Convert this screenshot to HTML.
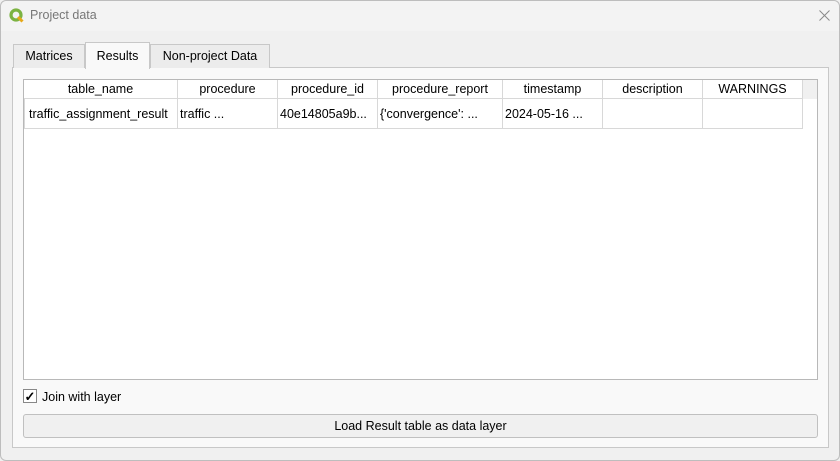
<html><head><style>
body{margin:0;width:840px;height:461px;background:#f0f0f0;font-family:"Liberation Sans",sans-serif;font-size:12px;color:#000;position:relative;overflow:hidden}
.a{position:absolute}
.tab{position:absolute;border:1px solid #c8c8c8;border-bottom:none;background:#ececec;text-align:center;line-height:23px;font-size:12.5px;box-sizing:border-box}
.h{position:absolute;top:80px;height:19px;line-height:19px;text-align:center;border-right:1px solid #d8d8d8;border-bottom:1px solid #d8d8d8;box-sizing:border-box;background:#fff;font-size:12.5px}
.c{position:absolute;top:99px;height:30px;line-height:30px;padding-left:2px;border-right:1px solid #d8d8d8;border-bottom:1px solid #d8d8d8;box-sizing:border-box;font-size:12.5px;white-space:nowrap;overflow:hidden}
</style></head><body>
<div class="a" style="left:0;top:0;width:838px;height:459px;border:1px solid #bdbdbd;border-radius:6px;background:#f0f0f0"></div>
<div class="a" style="left:1px;top:1px;width:838px;height:30px;background:#f3f3f3;border-radius:6px 6px 0 0"></div>
<svg class="a" style="left:9px;top:8px" width="15" height="15" viewBox="0 0 15 15"><circle cx="7" cy="7" r="5" fill="none" stroke="#7cb342" stroke-width="3.2"/><path d="M9 9 L13.5 13.5" stroke="#e6a818" stroke-width="3"/></svg>
<div class="a" style="left:30px;top:8px;font-size:12.5px;color:#777">Project data</div>
<svg class="a" style="left:819px;top:10px" width="11" height="11" viewBox="0 0 11 11"><path d="M0.5 0.5L10.5 10.5M10.5 0.5L0.5 10.5" stroke="#888" stroke-width="1"/></svg>
<div class="a" style="left:12px;top:67px;width:817px;height:381px;border:1px solid #c8c8c8;background:#f9f9f9;box-sizing:border-box"></div>
<div class="tab" style="left:13px;top:44px;width:72px;height:24px">Matrices</div>
<div class="tab" style="left:85px;top:42px;width:65px;height:27px;background:#f9f9f9;line-height:27px">Results</div>
<div class="tab" style="left:150px;top:44px;width:120px;height:24px">Non-project Data</div>
<div class="a" style="left:23px;top:79px;width:795px;height:301px;border:1px solid #b8b8b8;background:#fff;box-sizing:border-box"></div>
<div class="a" style="left:803px;top:80px;width:14px;height:19px;background:#f0f0f0"></div>
<div class="h" style="left:24px;width:154px">table_name</div>
<div class="h" style="left:178px;width:100px">procedure</div>
<div class="h" style="left:278px;width:100px">procedure_id</div>
<div class="h" style="left:378px;width:125px">procedure_report</div>
<div class="h" style="left:503px;width:100px">timestamp</div>
<div class="h" style="left:603px;width:100px">description</div>
<div class="h" style="left:703px;width:100px">WARNINGS</div>
<div class="c" style="left:24px;width:154px;border-left:1px solid #d8d8d8;padding-left:4px">traffic_assignment_result</div>
<div class="c" style="left:178px;width:100px">traffic ...</div>
<div class="c" style="left:278px;width:100px">40e14805a9b...</div>
<div class="c" style="left:378px;width:125px">{'convergence': ...</div>
<div class="c" style="left:503px;width:100px">2024-05-16 ...</div>
<div class="c" style="left:603px;width:100px"></div>
<div class="c" style="left:703px;width:100px"></div>
<div class="a" style="left:23px;top:389px;width:14px;height:14px;border:1px solid #888;background:#fff;box-sizing:border-box;font-size:13px;line-height:13px;text-align:center;font-weight:bold">✓</div>
<div class="a" style="left:42px;top:390px;font-size:12.5px">Join with layer</div>
<div class="a" style="left:23px;top:414px;width:795px;height:24px;border:1px solid #c0c0c0;border-radius:3px;background:#f0f0f0;box-sizing:border-box;text-align:center;line-height:22px;font-size:12.5px">Load Result table as data layer</div>
</body></html>
